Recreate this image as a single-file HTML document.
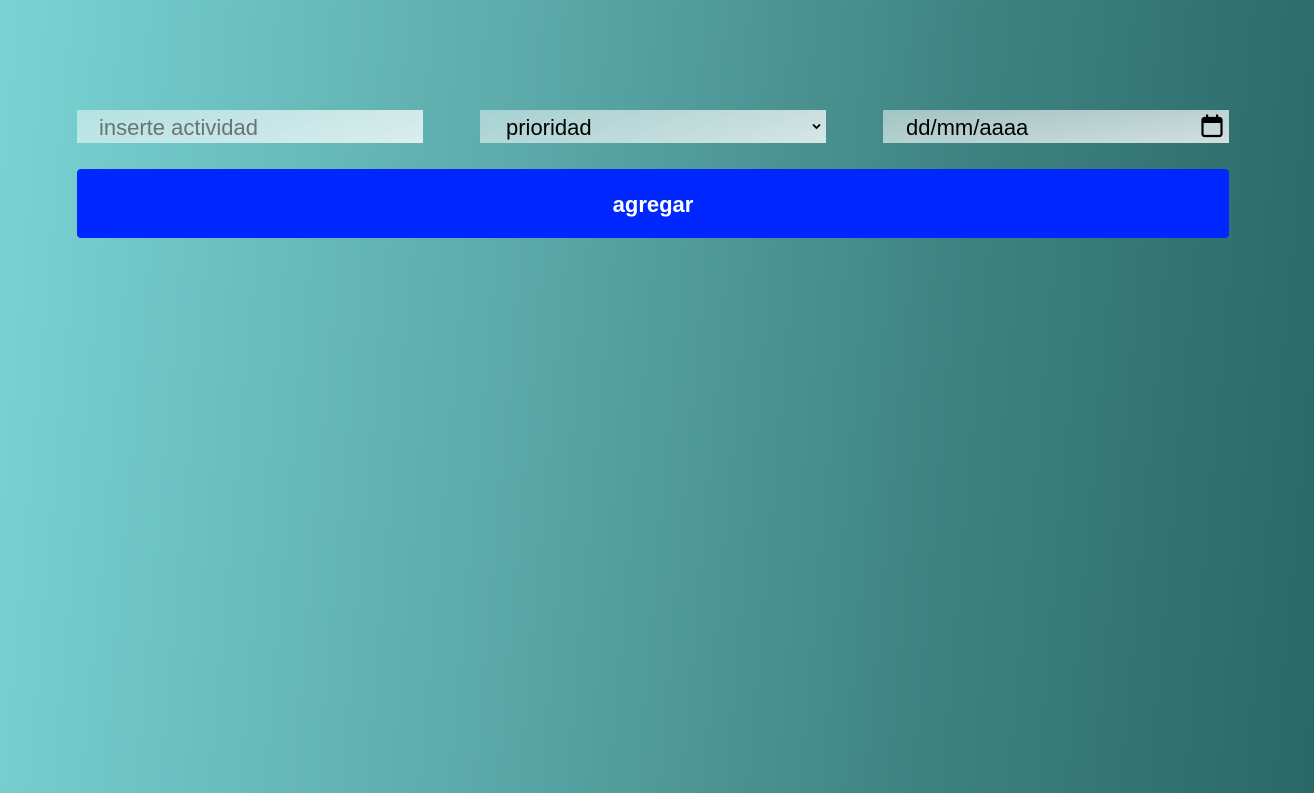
<!DOCTYPE html>
<html><head><meta charset="utf-8"><style>
html,body{margin:0;height:793px;overflow:hidden}
body{width:1314px;background:linear-gradient(95deg,#7ad3d4 0%,#5ba8a8 40%,#3f8482 70%,#2a6867 100%);font-family:"Liberation Sans",Arial,sans-serif;position:relative}
.f{position:absolute;top:110px;width:346px;height:33px;background:linear-gradient(160deg,rgba(255,255,255,.45),rgba(255,255,255,.78));font-size:22px;line-height:35px;box-sizing:border-box}
.btn{position:absolute;left:77px;top:169px;width:1152px;height:69px;background:#0027ff;border-radius:4px;color:#fff;font-weight:bold;font-size:22px;text-align:center;line-height:71px}
</style></head><body>
<div class="f" style="left:77px;padding-left:22px;color:#6b7373">inserte actividad</div>
<div class="f" style="left:480px;padding-left:26px;color:#000">prioridad
<svg style="position:absolute;right:5px;top:13px" width="9" height="7" viewBox="0 0 9 7"><path d="M1 1.5L4.5 5L8 1.5" stroke="#000" stroke-width="1.8" fill="none"/></svg></div>
<div class="f" style="left:883px;padding-left:23px;color:#000;background:linear-gradient(170deg,rgba(255,255,255,.5),rgba(255,255,255,.78))">dd/mm/aaaa
<svg style="position:absolute;right:6px;top:4px" width="22" height="24" viewBox="0 0 22 24"><rect x="1.5" y="4" width="19" height="18" rx="2" fill="none" stroke="#000" stroke-width="2.2"/><rect x="1.5" y="4" width="19" height="5" fill="#000"/><rect x="5" y="0.5" width="2.2" height="5" fill="#000"/><rect x="15" y="0.5" width="2.2" height="5" fill="#000"/></svg></div>
<div class="btn">agregar</div>
</body></html>
